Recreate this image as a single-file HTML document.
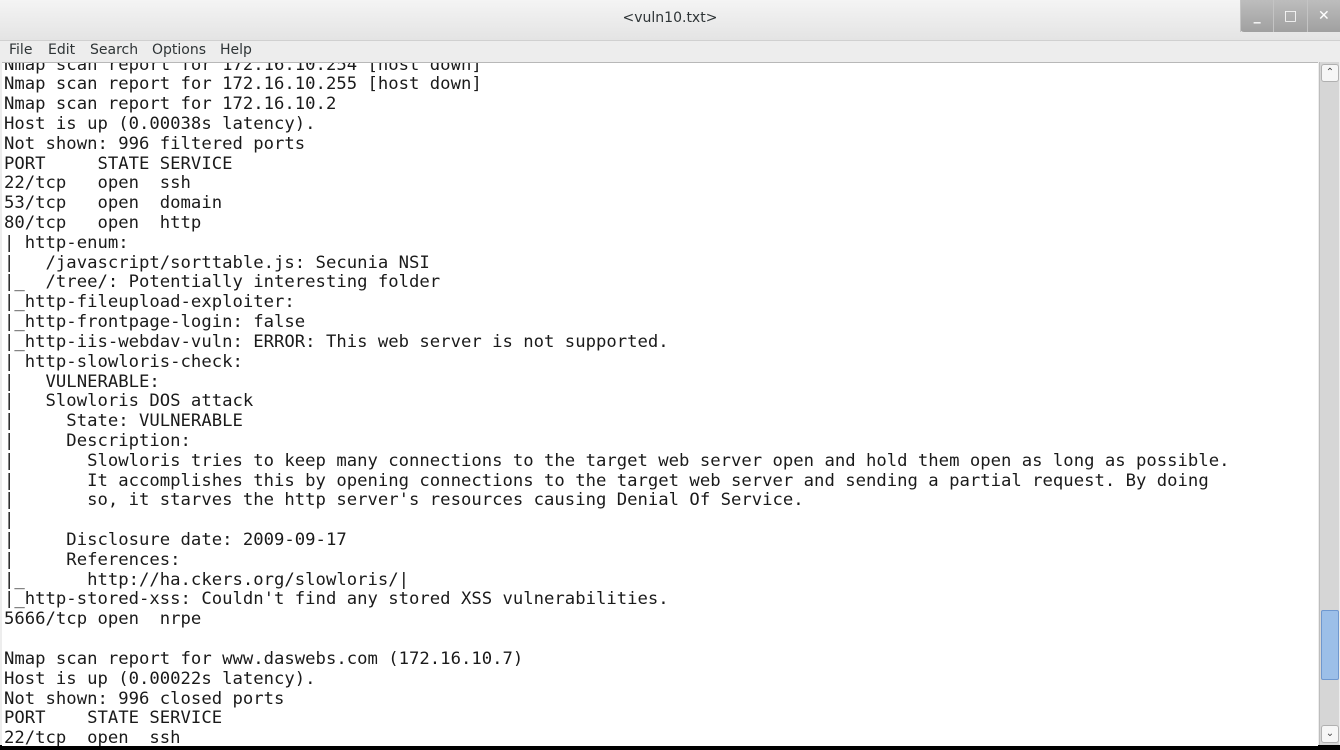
<!DOCTYPE html>
<html><head><meta charset="utf-8"><style>
html,body{margin:0;padding:0;width:1340px;height:750px;overflow:hidden;background:#000;}
#win{position:absolute;left:0;top:0;width:1340px;height:745px;background:#ededed;}
#title{position:absolute;left:0;top:0;width:1340px;height:40px;background:linear-gradient(#f4f4f4,#e4e4e4);border-bottom:1px solid #d0d0d0;font:14px "DejaVu Sans","Liberation Sans",sans-serif;text-align:center;line-height:36px;color:#2e3436;}
#btns{position:absolute;right:0;top:0;width:100px;height:32px;background:linear-gradient(#bdbdbd,#a0a0a0);border-bottom-left-radius:4px;display:flex;}
#btns div{flex:1;border-left:1px solid #c4c4c4;color:#fff;font:bold 14px "DejaVu Sans",sans-serif;text-align:center;line-height:32px;}
#menu{position:absolute;left:0;top:40px;width:1340px;height:22px;font:14px "DejaVu Sans","Liberation Sans",sans-serif;color:#2e3436;}
#menu span{position:absolute;top:2px;}
#text{position:absolute;left:2px;top:62px;width:1316px;height:683px;background:#fff;border-top:1px solid #b8b8b8;overflow:hidden;}
pre{margin:0;position:absolute;left:2px;top:-7.5px;font:17.25px "DejaVu Sans Mono","Liberation Mono",monospace;line-height:19.82px;color:#1a1a1a;}
#sb{position:absolute;left:1319px;top:62px;width:19px;height:683px;background:#d6d6d6;border-left:1px solid #bdbdbd;}
.arr{position:absolute;left:1px;width:16px;height:16px;background:#f6f6f6;border:1px solid #b0b0b0;border-radius:3px;font:10px "DejaVu Sans",sans-serif;text-align:center;line-height:16px;color:#444;}
#thumb{position:absolute;left:1px;top:548px;width:16px;height:68px;background:#9cbfe8;border:1px solid #6f98cf;border-radius:2px;}
</style></head><body>
<div id="win">
<div id="title">&lt;vuln10.txt&gt;<div id="btns"><div>_</div><div>□</div><div>✕</div></div></div>
<div id="menu"><span style="left:9px">File</span><span style="left:48px">Edit</span><span style="left:90px">Search</span><span style="left:152px">Options</span><span style="left:220px">Help</span></div>
<div id="text"><pre>Nmap scan report for 172.16.10.254 [host down]
Nmap scan report for 172.16.10.255 [host down]
Nmap scan report for 172.16.10.2
Host is up (0.00038s latency).
Not shown: 996 filtered ports
PORT     STATE SERVICE
22/tcp   open  ssh
53/tcp   open  domain
80/tcp   open  http
| http-enum:
|   /javascript/sorttable.js: Secunia NSI
|_  /tree/: Potentially interesting folder
|_http-fileupload-exploiter:
|_http-frontpage-login: false
|_http-iis-webdav-vuln: ERROR: This web server is not supported.
| http-slowloris-check:
|   VULNERABLE:
|   Slowloris DOS attack
|     State: VULNERABLE
|     Description:
|       Slowloris tries to keep many connections to the target web server open and hold them open as long as possible.
|       It accomplishes this by opening connections to the target web server and sending a partial request. By doing
|       so, it starves the http server's resources causing Denial Of Service.
|
|     Disclosure date: 2009-09-17
|     References:
|_      http://ha.ckers.org/slowloris/|
|_http-stored-xss: Couldn't find any stored XSS vulnerabilities.
5666/tcp open  nrpe

Nmap scan report for www.daswebs.com (172.16.10.7)
Host is up (0.00022s latency).
Not shown: 996 closed ports
PORT    STATE SERVICE
22/tcp  open  ssh</pre></div>
<div id="sb"><div class="arr" style="top:2px">⌃</div><div id="thumb"></div><div class="arr" style="top:663px">⌄</div></div>
</div>
</body></html>
